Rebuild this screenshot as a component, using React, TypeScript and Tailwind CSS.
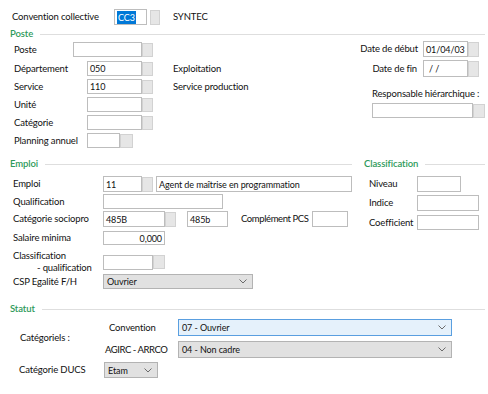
import React from "react";
import clsx from "clsx";

function Input({ className, children }: { className?: string; children?: React.ReactNode }) {
  return (
    <div
      className={clsx(
        "self-stretch border border-[#bdbdbd] bg-white flex items-center px-[2px] text-[9px] tracking-[-0.1px] leading-none overflow-hidden whitespace-nowrap",
        className
      )}
    >
      {children}
    </div>
  );
}

function Btn({ className }: { className?: string }) {
  return <div className={clsx("border border-[#d2d2d2] bg-[#e6e6e6] shrink-0", className)} />;
}

function Chevron() {
  return (
    <svg width="8" height="5" viewBox="0 0 8 5" className="shrink-0">
      <polyline points="0.5,0.5 4,4 7.5,0.5" fill="none" stroke="#6b6b6b" strokeWidth="1" />
    </svg>
  );
}

function Select({ className, children }: { className?: string; children?: React.ReactNode }) {
  return (
    <div
      className={clsx(
        "self-stretch border flex items-center justify-between pl-[3px] pr-[5px] text-[9px] tracking-[-0.1px] leading-none whitespace-nowrap",
        className
      )}
    >
      <span>{children}</span>
      <Chevron />
    </div>
  );
}

function Header({ title, className }: { title: string; className?: string }) {
  return (
    <div className={clsx("flex items-center h-[12px]", className)}>
      <span className="text-[#2e9a5a] font-semibold text-[9.5px] tracking-[-0.1px] leading-none">{title}</span>
      <div className="flex-1 h-px bg-[#dedede] ml-[7px]" />
    </div>
  );
}

export default function App() {
  return (
    <div className="w-[488px] h-[394px] bg-white text-[#111] text-[9.5px] tracking-[-0.15px] leading-none font-['Lato','Open_Sans',sans-serif] overflow-hidden">
      {/* Top row */}
      <div className="pt-[9px]">
        <div className="flex items-center h-[16px]">
          <span className="pl-[12px] w-[114px] shrink-0">Convention collective</span>
          <Input className="w-[33px] px-[1px]">
            <span className="bg-[#0078d7] text-white px-[1px] py-[2px]">CC3</span>
          </Input>
          <Btn className="ml-[3px] w-[10px] h-[15px]" />
          <span className="ml-[13px]">SYNTEC</span>
        </div>
      </div>

      {/* Poste */}
      <Header title="Poste" className="mt-[3px] pl-[10px] pr-[3px]" />
      <div className="flex">
        <div className="flex flex-col w-[300px]">
          <div className="flex items-center h-[15px] mt-[2px]">
            <span className="pl-[14px] w-[73px] shrink-0">Poste</span>
            <Input className="w-[69px]" />
            <Btn className="w-[11px] h-[14px]" />
          </div>
          <div className="flex items-center h-[15px] mt-[4px]">
            <span className="pl-[14px] w-[87px] shrink-0">Département</span>
            <Input className="w-[55px]">050</Input>
            <Btn className="w-[11px] h-[14px]" />
            <span className="ml-[20px]">Exploitation</span>
          </div>
          <div className="flex items-center h-[15px] mt-[3px]">
            <span className="pl-[14px] w-[87px] shrink-0">Service</span>
            <Input className="w-[55px]">110</Input>
            <Btn className="w-[11px] h-[14px]" />
            <span className="ml-[20px]">Service production</span>
          </div>
          <div className="flex items-center h-[15px] mt-[3px]">
            <span className="pl-[14px] w-[87px] shrink-0">Unité</span>
            <Input className="w-[55px]" />
            <Btn className="w-[11px] h-[14px]" />
          </div>
          <div className="flex items-center h-[15px] mt-[3px]">
            <span className="pl-[14px] w-[87px] shrink-0">Catégorie</span>
            <Input className="w-[55px]" />
            <Btn className="w-[11px] h-[14px]" />
          </div>
          <div className="flex items-center h-[15px] mt-[3px]">
            <span className="pl-[14px] w-[87px] shrink-0">Planning annuel</span>
            <Input className="w-[33px]" />
            <Btn className="w-[13px] h-[14px]" />
          </div>
        </div>
        <div className="ml-auto w-[133px] flex flex-col">
          <div className="flex items-center justify-end h-[16px] mt-[1px] pr-[9px]">
            <span>Date de début</span>
            <Input className="ml-[5px] w-[45px]">01/04/03</Input>
            <Btn className="w-[11px] h-[15px]" />
          </div>
          <div className="flex items-center justify-end h-[17px] mt-[3px] pr-[9px]">
            <span>Date de fin</span>
            <Input className="ml-[6px] w-[45px] pl-[5px]">/ /</Input>
            <Btn className="w-[11px] h-[16px]" />
          </div>
          <div className="h-[12px] mt-[11px] pl-[17px] flex items-center whitespace-nowrap">Responsable hiérarchique :</div>
          <div className="flex items-center h-[15px] mt-[3px] pl-[17px]">
            <Input className="w-[101px]" />
            <Btn className="w-[12px] h-[14px]" />
          </div>
        </div>
      </div>

      {/* Emploi + Classification */}
      <div className="flex mt-[10px]">
        <div className="w-[352px] flex flex-col shrink-0">
          <Header title="Emploi" className="pl-[10px]" />
          <div className="flex items-center h-[16px] mt-[6px]">
            <span className="pl-[13px] w-[103px] shrink-0">Emploi</span>
            <Input className="w-[39px]">11</Input>
            <Btn className="w-[11px] h-[15px]" />
            <Input className="ml-[3px] w-[196px]">Agent de maîtrise en programmation</Input>
          </div>
          <div className="flex items-center h-[15px] mt-[2px]">
            <span className="pl-[13px] w-[103px] shrink-0">Qualification</span>
            <Input className="w-[120px]" />
          </div>
          <div className="flex items-center h-[16px] mt-[2px]">
            <span className="pl-[13px] w-[103px] shrink-0">Catégorie sociopro</span>
            <Input className="w-[62px]">485B</Input>
            <Btn className="w-[11px] h-[15px]" />
            <Input className="ml-[11px] w-[41px]">485b</Input>
            <span className="ml-[13px] w-[71px] shrink-0 whitespace-nowrap tracking-[-0.4px]">Complément PCS</span>
            <Input className="w-[36px]" />
          </div>
          <div className="flex items-center h-[14px] mt-[4px]">
            <span className="pl-[13px] w-[103px] shrink-0">Salaire minima</span>
            <Input className="w-[62px] justify-end">0,000</Input>
          </div>
          <div className="flex items-center h-[24px] mt-[5px]">
            <div className="pl-[13px] w-[103px] shrink-0 flex flex-col">
              <span className="h-[12px] flex items-center">Classification</span>
              <span className="h-[12px] flex items-center pl-[24px] whitespace-nowrap">- qualification</span>
            </div>
            <div className="flex items-center h-[15px]">
              <Input className="w-[50px]" />
              <Btn className="w-[12px] h-[14px]" />
            </div>
          </div>
          <div className="flex items-center h-[15px]">
            <span className="pl-[13px] w-[103px] shrink-0">CSP Egalité F/H</span>
            <Select className="w-[150px] bg-[#e1e1e1] border-[#b3b3b3]">Ouvrier</Select>
          </div>
        </div>
        <div className="flex-1 flex flex-col">
          <Header title="Classification" className="pl-[12px] pr-[3px]" />
          <div className="flex items-center h-[16px] mt-[6px]">
            <span className="pl-[17px] w-[65px] shrink-0">Niveau</span>
            <Input className="w-[44px]" />
          </div>
          <div className="flex items-center h-[16px] mt-[3px]">
            <span className="pl-[17px] w-[65px] shrink-0">Indice</span>
            <Input className="w-[62px]" />
          </div>
          <div className="flex items-center h-[15px] mt-[4px]">
            <span className="pl-[17px] w-[65px] shrink-0">Coefficient</span>
            <Input className="w-[62px]" />
          </div>
        </div>
      </div>

      {/* Statut */}
      <Header title="Statut" className="mt-[14px] pl-[10px] pr-[3px]" />
      <div className="flex">
        <div className="w-[105px] pl-[20px] pt-[17px] shrink-0">
          <span className="h-[12px] flex items-center">Catégoriels :</span>
        </div>
        <div className="flex flex-col">
          <div className="flex items-center h-[17px] mt-[4px]">
            <span className="pl-[4px] w-[73px] shrink-0">Convention</span>
            <Select className="w-[274px] bg-[#e5f1fb] border-[#5a9fe0]">07 - Ouvrier</Select>
          </div>
          <div className="flex items-center h-[17px] mt-[5px]">
            <span className="w-[73px] shrink-0 whitespace-nowrap tracking-[-0.45px]">AGIRC - ARRCO</span>
            <Select className="w-[274px] bg-[#e1e1e1] border-[#b3b3b3]">04 - Non cadre</Select>
          </div>
        </div>
      </div>
      <div className="flex items-center h-[16px] mt-[4px]">
        <span className="pl-[19px] w-[104px] shrink-0">Catégorie DUCS</span>
        <Select className="w-[54px] bg-[#e1e1e1] border-[#b3b3b3]">Etam</Select>
      </div>
    </div>
  );
}
